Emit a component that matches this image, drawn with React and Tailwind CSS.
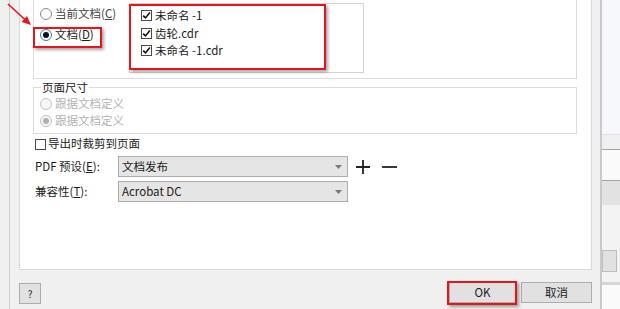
import React from 'react';

const Radio = ({ checked, disabled, focused, children }) => {
  const ring = disabled
    ? 'border-[#c2c2c2] bg-[#f7f7f7]'
    : focused
      ? 'border-[#3d7cc2] bg-white'
      : 'border-[#8c8c8c] bg-white';
  const dot = disabled ? 'bg-[#b0b0b0]' : 'bg-[#111]';
  return (
    <div className="flex h-[17px] items-center">
      <span className={`flex h-[12px] w-[12px] shrink-0 items-center justify-center rounded-full border ${ring}`}>
        {checked && <span className={`h-[6px] w-[6px] rounded-full ${dot}`}></span>}
      </span>
      <span className={`ml-[3px] ${disabled ? 'text-[#b3b3b3]' : ''}`}>{children}</span>
    </div>
  );
};

const CheckBox = ({ checked }) => (
  <span className="flex h-[11px] w-[11px] shrink-0 items-center justify-center border border-[#4a4a4a] bg-white">
    {checked && (
      <svg width="9" height="9" viewBox="0 0 9 9">
        <path d="M1.2 4.6 L3.5 6.9 L7.9 1.6" fill="none" stroke="#111" strokeWidth="1.6" />
      </svg>
    )}
  </span>
);

const Select = ({ value }) => (
  <div className="relative flex h-[21px] w-[230px] items-center border border-[#adadad] bg-[#e5e5e5] pl-[3px]">
    <span>{value}</span>
    {/* drop arrow */}
    <svg className="absolute right-[5px] top-[8px]" width="7" height="4" viewBox="0 0 7 4">
      <path d="M0 0 H7 L3.5 4 Z" fill="#7a7a7a" />
    </svg>
  </div>
);

const Key = ({ children }) => <span className="underline underline-offset-[1px]">{children}</span>;

const App = () => {
  return (
    <div className="relative flex h-[309px] w-[620px] overflow-hidden bg-[#f0f0f0] font-['Noto_Sans_CJK_SC',sans-serif] text-[11.5px] leading-none text-[#1b1b1b]">
      {/* left window edge */}
      <div className="w-[10px] shrink-0 border-r border-[#cdcdcd]"></div>

      {/* dialog */}
      <div className="flex w-[590px] shrink-0 flex-col pl-[9px]">
        <div className="h-[270px] w-[573px] border-x border-b border-[#d9d9d9] bg-white pl-[13px] pr-[14px]">
          {/* documents group */}
          <div className="flex h-[79px] border-x border-b border-[#dcdcdc]">
            <div className="w-[95px] shrink-0 pl-[6px] pt-[5px]">
              <Radio>
                <span className="text-[#444]">
                  当前文档(<Key>C</Key>)
                </span>
              </Radio>
              <div className="mt-[4px]">
                <Radio checked focused>
                  文档(<Key>D</Key>)
                </Radio>
              </div>
            </div>
            <div className="mt-[3px] h-[70px] w-[235px] border border-[#d4d4d4] bg-white pl-[11px] pt-[3px]">
              {['未命名 -1', '齿轮.cdr', '未命名 -1.cdr'].map((name) => (
                <div key={name} className="flex h-[17.5px] items-center">
                  <CheckBox checked />
                  <span className="ml-[3px]">{name}</span>
                </div>
              ))}
            </div>
          </div>

          {/* page size group */}
          <fieldset className="border border-[#dcdcdc] px-[6px] pb-[4px]">
            <legend className="ml-[1px] px-[1px] leading-[16px]">页面尺寸</legend>
            <Radio disabled>跟据文档定义</Radio>
            <Radio disabled checked>
              跟据文档定义
            </Radio>
          </fieldset>

          <div className="mt-[1px] flex h-[18px] items-center pl-[2px]">
            <CheckBox />
            <span className="ml-[2px]">导出时裁剪到页面</span>
          </div>

          <div className="mt-[3px] flex h-[21px] items-center">
            <span className="w-[85px] shrink-0 pl-[2px]">
              PDF 预设(<Key>E</Key>):
            </span>
            <Select value="文档发布" />
            <svg className="ml-[8px]" width="14" height="14" viewBox="0 0 14 14">
              <path d="M7 0 V14 M0 7 H14" stroke="#222" strokeWidth="1.8" />
            </svg>
            <svg className="ml-[12px]" width="15" height="14" viewBox="0 0 15 14">
              <path d="M0 7 H15" stroke="#222" strokeWidth="1.8" />
            </svg>
          </div>

          <div className="mt-[4px] flex h-[21px] items-center">
            <span className="w-[85px] shrink-0 pl-[2px]">
              兼容性(<Key>T</Key>):
            </span>
            <Select value="Acrobat DC" />
          </div>
        </div>

        {/* footer buttons */}
        <div className="mt-[12px] flex w-[573px] items-start">
          <button className="mt-[1px] flex h-[21px] w-[22px] items-center justify-center border border-[#adadad] bg-[#e1e1e1] text-[10px]">
            ?
          </button>
          <button className="ml-auto flex h-[21px] w-[67px] items-center justify-center border border-[#adadad] bg-[#e1e1e1]">
            OK
          </button>
          <button className="ml-[5px] flex h-[21px] w-[71px] items-center justify-center border border-[#adadad] bg-[#e1e1e1]">
            取消
          </button>
        </div>
      </div>

      {/* window behind, on the right */}
      <div className="flex flex-1 flex-col border-l-2 border-[#c9c9c9]">
        <div className="h-[135px] border-b border-[#d7e3f1] bg-[#f6f8fb]"></div>
        <div className="h-[14px] bg-[#f0f0f0]"></div>
        <div className="h-[32px] border-y border-[#a3a3a3] bg-[#fafafa]"></div>
        <div className="h-[24px] bg-[#e2e2e2]"></div>
        <div className="flex h-[77px] flex-col bg-[#f3f3f3] pt-[45px]">
          <div className="h-[22px] w-[15px] border border-[#bdbdbd] bg-[#e1e1e1]"></div>
        </div>
        <div className="h-[3px] bg-[#d6d6d6]"></div>
        <div className="flex-1 bg-[#fafafa]"></div>
      </div>

      {/* red annotations */}
      <svg className="absolute left-0 top-0" width="40" height="30" viewBox="0 0 40 30">
        <path d="M8 4 L26 20.5" stroke="#e8141b" strokeWidth="1.6" />
        <polygon points="31,25 21.6,22 27,16" fill="#e8141b" />
      </svg>
      <div className="absolute left-[33px] top-[27px] h-[21px] w-[69px] border-2 border-[#e8141b] shadow-[2px_2px_3px_rgba(0,0,0,0.35)]"></div>
      <div className="absolute left-[129px] top-[4px] h-[66px] w-[197px] border-2 border-[#e8141b] shadow-[2px_2px_3px_rgba(0,0,0,0.35)]"></div>
      <div className="absolute left-[447px] top-[281px] h-[24px] w-[70px] border-2 border-[#e8141b] shadow-[2px_2px_3px_rgba(0,0,0,0.35)]"></div>
    </div>
  );
};

export default App;
